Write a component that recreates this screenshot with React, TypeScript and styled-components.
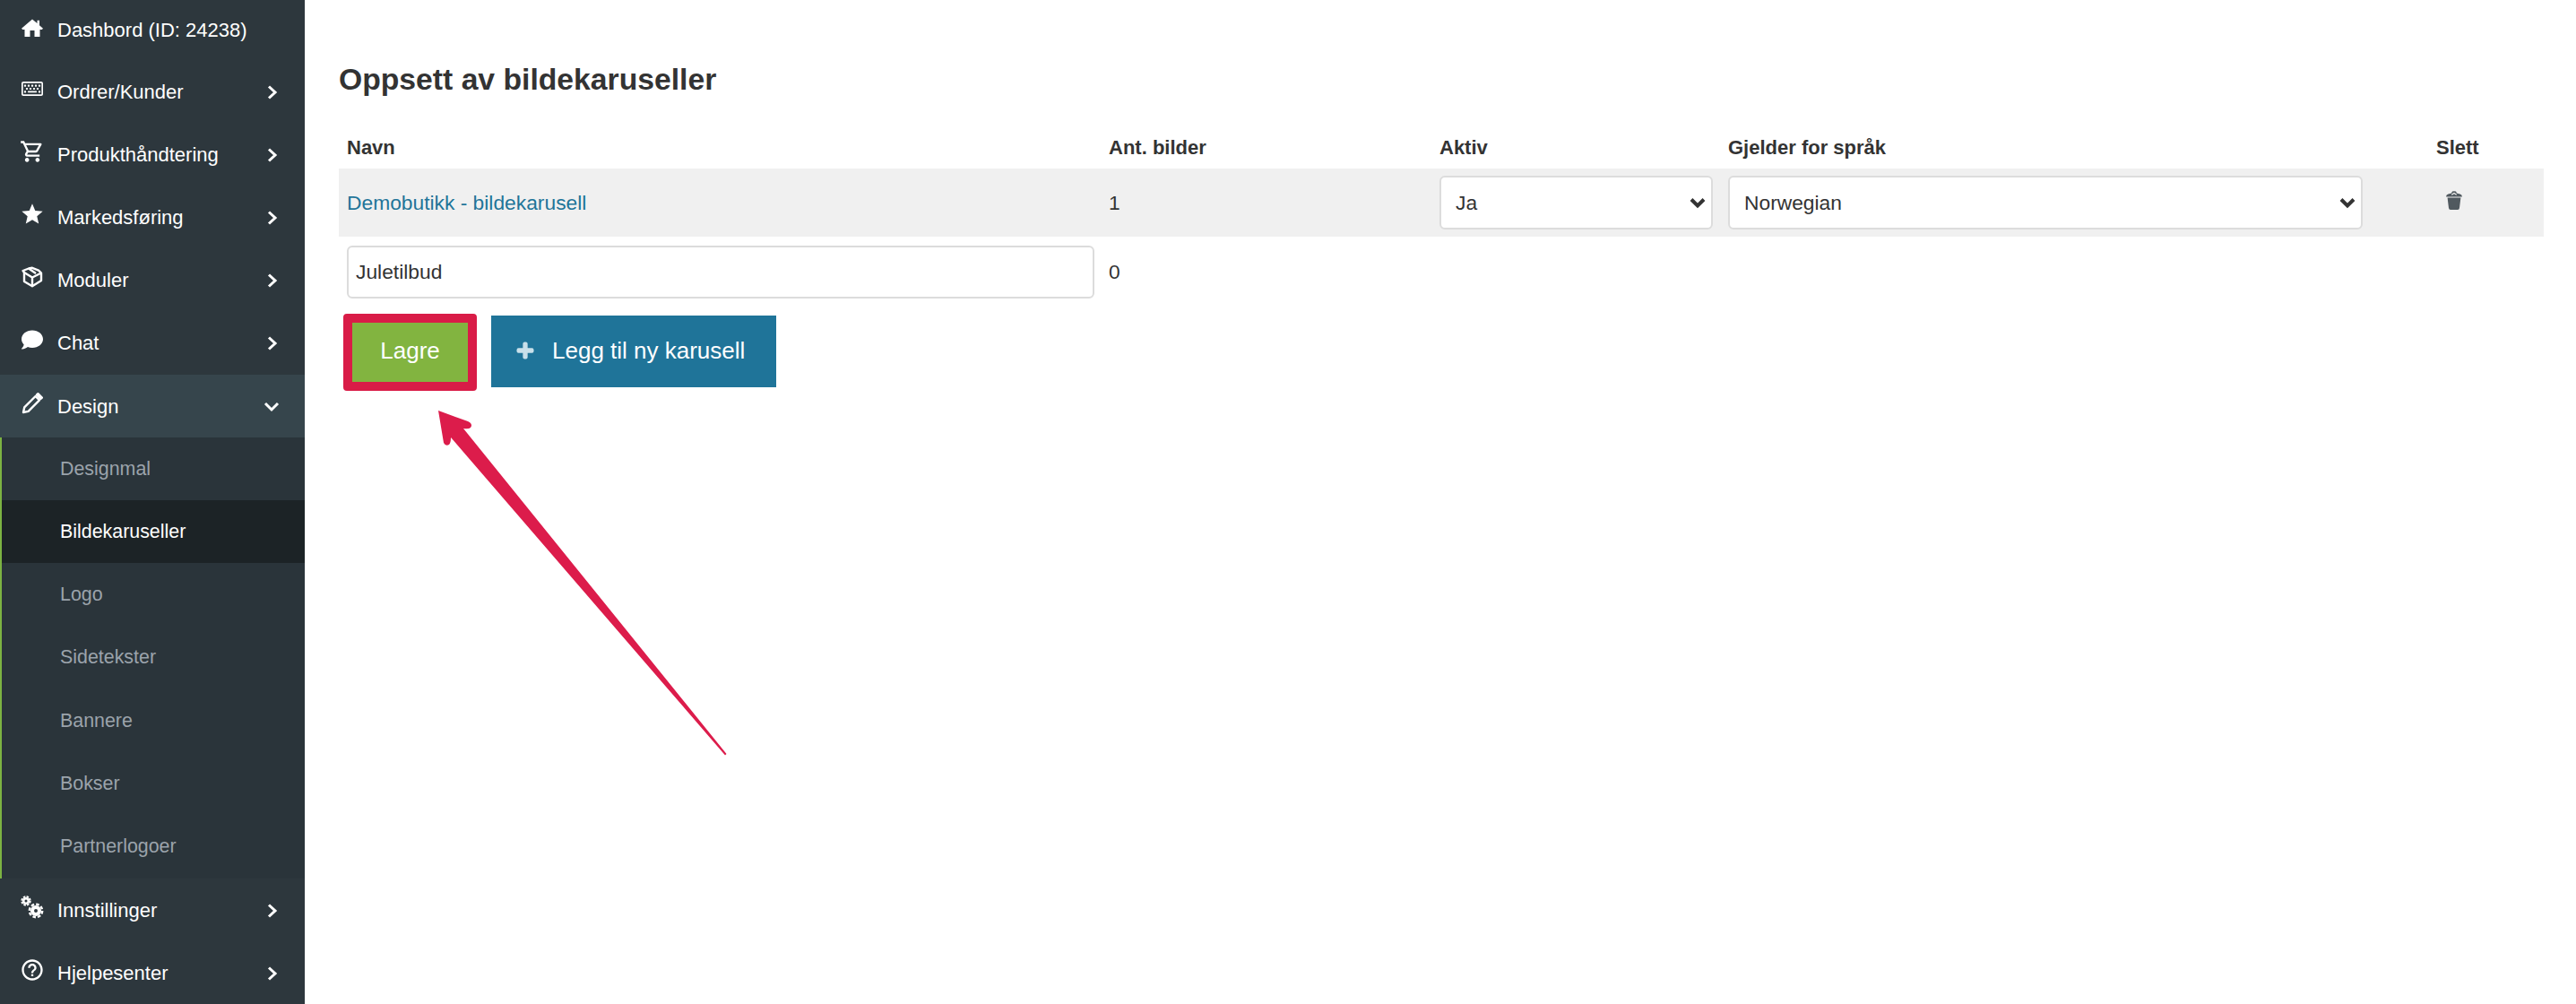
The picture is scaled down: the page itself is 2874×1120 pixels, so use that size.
import React from "react";
import styled, { createGlobalStyle } from "styled-components";
import { FaRegKeyboard, FaComment, FaPlus } from "react-icons/fa";
import { MdOutlineShoppingCart, MdHelpOutline, MdStar } from "react-icons/md";

const GlobalStyle = createGlobalStyle`
  html, body {
    margin: 0;
    height: 1120px;
    overflow: hidden;
    background: #fff;
    font-family: "Liberation Sans", Arial, sans-serif;
    color: #333;
  }
`;

const Page = styled.div`
  position: relative;
  display: flex;
  width: 2874px;
  height: 1120px;
`;

const Sidebar = styled.nav`
  flex: 0 0 340px;
  display: flex;
  flex-direction: column;
  background: #2d373d;
`;

const NavRow = styled.div<{ $open?: boolean; $first?: boolean }>`
  display: flex;
  align-items: center;
  gap: 16px;
  box-sizing: border-box;
  height: ${(p) => (p.$first ? "67px" : "70px")};
  margin-top: ${(p) => (p.$open ? "1px" : "0")};
  padding: 2px ${(p) => (p.$open ? "28px" : "30px")} 0 24px;
  background: ${(p) => (p.$open ? "#36454c" : "transparent")};
  color: #fff;
  font-size: 22px;
`;

const NavIcon = styled.span`
  display: flex;
  justify-content: center;
  flex: 0 0 24px;
  width: 24px;
  min-width: 0;
  margin-bottom: 7px;
  font-size: 24px;

  svg {
    flex-shrink: 0;
  }
`;

const NavChevron = styled.svg`
  margin-left: auto;
  fill: none;
  stroke: #fff;
  stroke-width: 3;
`;

const SubMenu = styled.div`
  display: flex;
  flex-direction: column;
  border-left: 2px solid #7cb342;
  background: #2a343a;
`;

const SubRow = styled.div<{ $active?: boolean }>`
  display: flex;
  align-items: center;
  height: 70.3px;
  padding-left: 65px;
  font-size: 21.4px;
  color: ${(p) => (p.$active ? "#fff" : "#9ba3ab")};
  background: ${(p) => (p.$active ? "#1c2326" : "transparent")};
`;

const Main = styled.main`
  flex: 1;
  padding: 0 36px 0 38px;
`;

const Title = styled.h1`
  margin: 0;
  height: 140px;
  padding-top: 68px;
  box-sizing: border-box;
  font-size: 33.7px;
  line-height: 40px;
  font-weight: 700;
  color: #333;
`;

const Table = styled.table`
  width: 100%;
  table-layout: fixed;
  border-collapse: collapse;
  font-size: 22.8px;
`;

const HeadCell = styled.th<{ $w: number }>`
  box-sizing: border-box;
  width: ${(p) => p.$w}px;
  height: 48px;
  padding: 2px 7px 0 9px;
  text-align: left;
  font-size: 22px;
  font-weight: 700;
  color: #333;
`;

const BodyRow = styled.tr<{ $shaded?: boolean }>`
  height: ${(p) => (p.$shaded ? "76px" : "79px")};
  background: ${(p) => (p.$shaded ? "#f0f0f0" : "transparent")};
`;

const Cell = styled.td`
  padding: 0 7px 0 9px;
  color: #333;
`;

const Link = styled.a`
  color: #1f7599;
  text-decoration: none;
`;

const Field = styled.input`
  display: block;
  width: 100%;
  height: 59px;
  margin-top: -1px;
  padding: 0 8px;
  box-sizing: border-box;
  border: 2px solid #dcdcdc;
  border-radius: 6px;
  background: #fff;
  font: inherit;
  color: #333;
  outline: none;
`;

const SelectWrap = styled.div<{ $w: number }>`
  position: relative;
  width: ${(p) => p.$w}px;
`;

const Select = styled.select`
  display: block;
  width: 100%;
  height: 60px;
  padding: 0 16px;
  box-sizing: border-box;
  appearance: none;
  border: 2px solid #dcdcdc;
  border-radius: 6px;
  background: #fff;
  font: inherit;
  color: #333;
  outline: none;
`;

const SelectChevron = styled.svg`
  position: absolute;
  top: 24px;
  right: 8px;
  fill: none;
  stroke: #333;
  stroke-width: 4;
  pointer-events: none;
`;

const TrashButton = styled.span`
  display: block;
  padding-left: 11px;
  line-height: 0;
  margin-top: -5px;
`;

const Actions = styled.div`
  display: flex;
  gap: 20px;
  margin: 9px 0 0 9px;
`;

const ButtonBase = styled.button`
  height: 80px;
  border: 0;
  padding-bottom: 3px;
  font-family: inherit;
  font-size: 26px;
  color: #fff;
`;

const SaveWrap = styled.div`
  position: relative;
  display: flex;
`;

const SaveButton = styled(ButtonBase)`
  width: 141px;
  background: #82b440;
`;

const Highlight = styled.span`
  position: absolute;
  inset: -2px -4px -4px -4px;
  border: 10px solid #d91c47;
  border-radius: 4px;
`;

const AddButton = styled(ButtonBase)`
  display: flex;
  align-items: center;
  gap: 20px;
  width: 318px;
  padding-left: 28px;
  background: #1f7499;

  svg {
    font-size: 20px;
    color: #c9e0ea;
    stroke: #c9e0ea;
    stroke-width: 40px;
  }
`;

const Arrow = styled.svg`
  position: absolute;
  left: 480px;
  top: 450px;
  fill: #dc1c4b;
`;

const HomeIcon = () => (
  <svg width="24" height="24" viewBox="0 0 24 24" fill="#fff">
    <path d="M12 2.500 17.500 7V3.800H20V9.200L24 12.800 22.800 14H20.500V22H14.500V15H9.500V22H3.500V14H1.200L0 12.800z" />
  </svg>
);

const BoxIcon = () => (
  <svg width="24" height="24" viewBox="0 0 24 24" fill="none" stroke="#fff" strokeWidth="2.4" strokeLinejoin="round">
    <path d="M12 1.800 19 4.600 22 7.500V16L12 22.200 3 17V7L1.600 5 8 2.500z" />
    <path d="M3 7 12 12.500 22 7.500M12 12.500V22M8 2.500 16 8" />
  </svg>
);

const PencilIcon = () => (
  <svg width="24" height="24" viewBox="0 0 24 24" fill="none" stroke="#fff" strokeWidth="2.4" strokeLinejoin="round">
    <path d="M2 22 3.200 16.400 15.600 4 20 8.400 7.600 20.800z" />
    <path d="M17 2.400 18.400 1.200 22.800 5.600 21.400 7z" fill="#fff" />
  </svg>
);

const GearsIcon = () => (
  <svg width="26" height="26" viewBox="0 0 26 26" fill="none" stroke="#fff">
    <circle cx="6" cy="6" r="2.800" strokeWidth="2.600" />
    <circle cx="6" cy="6" r="4.800" strokeWidth="1.800" strokeDasharray="2.500 1.270" />
    <circle cx="17" cy="17" r="4" strokeWidth="4" />
    <circle cx="17" cy="17" r="7.200" strokeWidth="2.400" strokeDasharray="3.600 2.050" />
  </svg>
);

const TrashIcon = () => (
  <svg width="18" height="21" viewBox="0 0 18 21" fill="#50595f">
    <path d="M1.600 7.600h14.800L15 19q-.2 2-2 2H5q-1.800 0-2-2z" />
    <path d="M0 6.400Q.2 4.400 2.400 3.600L6 2.400 7 .6Q9-.2 11 .6l1 1.800 3.600 1.200Q17.800 4.400 18 6.400z" />
    <path d="M6.300 4.200 9 2.400l2.700 1.800" fill="none" stroke="#f0f0f0" strokeWidth="1.200" />
  </svg>
);

const Chevron = ({ open }: { open?: boolean }) =>
  open ? (
    <NavChevron width="18" height="12" viewBox="0 0 18 12">
      <path d="M2 2 9 9 16 2" />
    </NavChevron>
  ) : (
    <NavChevron width="12" height="16" viewBox="0 0 12 16">
      <path d="M2 1.500 9 8 2 14.500" />
    </NavChevron>
  );

const topItems = [
  { label: "Ordrer/Kunder", icon: <FaRegKeyboard /> },
  { label: "Produkthåndtering", icon: <MdOutlineShoppingCart size={28} /> },
  { label: "Markedsføring", icon: <MdStar size={28} /> },
  { label: "Moduler", icon: <BoxIcon /> },
  { label: "Chat", icon: <FaComment /> },
];

const subItems = ["Designmal", "Bildekaruseller", "Logo", "Sidetekster", "Bannere", "Bokser", "Partnerlogoer"];

export default function App() {
  return (
    <Page>
      <GlobalStyle />
      <Sidebar>
        <NavRow $first>
          <NavIcon>
            <HomeIcon />
          </NavIcon>
          Dashbord (ID: 24238)
        </NavRow>
        {topItems.map((item) => (
          <NavRow key={item.label}>
            <NavIcon>{item.icon}</NavIcon>
            {item.label}
            <Chevron />
          </NavRow>
        ))}
        <NavRow $open>
          <NavIcon>
            <PencilIcon />
          </NavIcon>
          Design
          <Chevron open />
        </NavRow>
        <SubMenu>
          {subItems.map((name) => (
            <SubRow key={name} $active={name === "Bildekaruseller"}>
              {name}
            </SubRow>
          ))}
        </SubMenu>
        <NavRow>
          <NavIcon>
            <GearsIcon />
          </NavIcon>
          Innstillinger
          <Chevron />
        </NavRow>
        <NavRow>
          <NavIcon>
            <MdHelpOutline size={28} />
          </NavIcon>
          Hjelpesenter
          <Chevron />
        </NavRow>
      </Sidebar>

      <Main>
        <Title>Oppsett av bildekaruseller</Title>
        <Table>
          <thead>
            <tr>
              <HeadCell $w={850}>Navn</HeadCell>
              <HeadCell $w={369}>Ant. bilder</HeadCell>
              <HeadCell $w={322}>Aktiv</HeadCell>
              <HeadCell $w={790}>Gjelder for språk</HeadCell>
              <HeadCell $w={129}>Slett</HeadCell>
            </tr>
          </thead>
          <tbody>
            <BodyRow $shaded>
              <Cell>
                <Link href="#">Demobutikk - bildekarusell</Link>
              </Cell>
              <Cell>1</Cell>
              <Cell>
                <SelectWrap $w={305}>
                  <Select defaultValue="Ja">
                    <option>Ja</option>
                    <option>Nei</option>
                  </Select>
                  <SelectChevron width="18" height="13" viewBox="0 0 18 13">
                    <path d="M2 2.500 9 9.500 16 2.500" />
                  </SelectChevron>
                </SelectWrap>
              </Cell>
              <Cell>
                <SelectWrap $w={708}>
                  <Select defaultValue="Norwegian">
                    <option>Norwegian</option>
                  </Select>
                  <SelectChevron width="18" height="13" viewBox="0 0 18 13">
                    <path d="M2 2.500 9 9.500 16 2.500" />
                  </SelectChevron>
                </SelectWrap>
              </Cell>
              <Cell>
                <TrashButton>
                  <TrashIcon />
                </TrashButton>
              </Cell>
            </BodyRow>
            <BodyRow>
              <Cell>
                <Field defaultValue="Juletilbud" />
              </Cell>
              <Cell>0</Cell>
              <Cell />
              <Cell />
              <Cell />
            </BodyRow>
          </tbody>
        </Table>
        <Actions>
          <SaveWrap>
            <SaveButton>Lagre</SaveButton>
            <Highlight />
          </SaveWrap>
          <AddButton>
            <FaPlus />
            Legg til ny karusell
          </AddButton>
        </Actions>
      </Main>

      <Arrow width="340" height="400" viewBox="480 450 340 400">
        <path d="M489 458 522 470Q528 473 525 477 523 479 517 478L810.500 841 809 842.500 503 488Q503 494 501 496 497 498 495 494Z" />
      </Arrow>
    </Page>
  );
}
